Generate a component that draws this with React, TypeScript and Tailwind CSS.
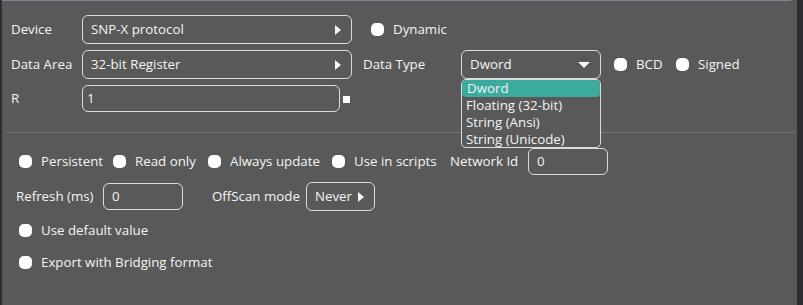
function Check({ label }: { label?: string }) {
  return (
    <span className="flex items-center">
      <span className="w-[13px] h-[13px] rounded-[5px] bg-white shrink-0" />
      {label && <span className="ml-[9px] whitespace-nowrap">{label}</span>}
    </span>
  )
}

function RightArrow() {
  return (
    <svg width="6" height="10" viewBox="0 0 6 10" className="shrink-0">
      <polygon points="0,0 6,5 0,10" fill="#f4f4f4" />
    </svg>
  )
}

function SelectBox({ value }: { value: string }) {
  return (
    <div className="w-[270px] h-[29px] border border-[#dcdcdc] rounded-[6px] flex items-center justify-between pl-[8px] pr-[10px]">
      <span>{value}</span>
      <RightArrow />
    </div>
  )
}

export default function App() {
  return (
    <div className="relative w-[803px] h-[305px] bg-[#595959] text-[#f4f4f4] text-[13.3px] font-['Open_Sans',sans-serif] overflow-hidden border-l-2 border-l-[#2c2c32] border-r-[6px] border-r-[#2c2c32]">
      <div className="h-px bg-[#7b8594] mr-[6px]" />

      {/* Device */}
      <div className="flex items-center mt-[14px] pl-[9px]">
        <span className="w-[71px]">Device</span>
        <SelectBox value="SNP-X protocol" />
        <span className="ml-[19px]">
          <Check label="Dynamic" />
        </span>
      </div>

      {/* Data area / type */}
      <div className="flex items-center mt-[6px] pl-[9px]">
        <span className="w-[71px]">Data Area</span>
        <SelectBox value="32-bit Register" />
        <span className="ml-[11px] w-[98px]">Data Type</span>
        <div className="w-[140px] h-[29px] border border-[#dcdcdc] rounded-[6px] flex items-center justify-between pl-[8px] pr-[10px]">
          <span>Dword</span>
          <svg width="12" height="6" viewBox="0 0 12 6">
            <polygon points="0,0 12,0 6,6" fill="#f4f4f4" />
          </svg>
        </div>
        <span className="ml-[13px] w-[62px]">
          <Check label="BCD" />
        </span>
        <Check label="Signed" />
      </div>

      {/* R */}
      <div className="flex items-center mt-[6px] pl-[9px]">
        <span className="w-[71px]">R</span>
        <div className="w-[258px] h-[27px] border border-[#dcdcdc] rounded-[6px] flex items-center pl-[4px]">1</div>
        <span className="ml-[3px] mt-[2px] w-[7px] h-[7px] bg-white" />
      </div>

      <div className="h-px bg-[#6c7886] mt-[20px] ml-[4px] mr-[2px]" />

      {/* options */}
      <div className="flex items-center mt-[15px] pl-[17px]">
        <span className="w-[94px]">
          <Check label="Persistent" />
        </span>
        <span className="w-[95px]">
          <Check label="Read only" />
        </span>
        <span className="w-[124px]">
          <Check label="Always update" />
        </span>
        <span className="w-[118px]">
          <Check label="Use in scripts" />
        </span>
        <span className="w-[78px]">Network Id</span>
        <div className="w-[80px] h-[27px] border border-[#dcdcdc] rounded-[6px] flex items-center pl-[8px]">0</div>
      </div>

      {/* refresh */}
      <div className="flex items-center mt-[7px] pl-[14px]">
        <span className="w-[87px]">Refresh (ms)</span>
        <div className="w-[80px] h-[27px] border border-[#dcdcdc] rounded-[6px] flex items-center pl-[8px]">0</div>
        <span className="ml-[29px] w-[94px]">OffScan mode</span>
        <div className="w-[69px] h-[29px] border border-[#dcdcdc] rounded-[6px] flex items-center pl-[8px] gap-[6px]">
          <span>Never</span>
          <RightArrow />
        </div>
      </div>

      <div className="mt-[13px] pl-[17px] h-[13px] flex items-center">
        <Check label="Use default value" />
      </div>
      <div className="mt-[19px] pl-[17px] h-[13px] flex items-center">
        <Check label="Export with Bridging format" />
      </div>

      {/* open dropdown list */}
      <div className="absolute left-[459px] top-[79px] w-[140px] h-[69px] border border-[#dcdcdc] rounded-[5px] bg-[#595959] flex flex-col">
        <div className="h-[17px] bg-[#3aab9c] rounded-[4px] pl-[5px] leading-[17px]">Dword</div>
        <div className="h-[17px] pl-[4px] leading-[17px]">Floating (32-bit)</div>
        <div className="h-[17px] pl-[4px] leading-[17px]">String (Ansi)</div>
        <div className="h-[17px] pl-[4px] leading-[17px]">String (Unicode)</div>
      </div>
    </div>
  )
}
